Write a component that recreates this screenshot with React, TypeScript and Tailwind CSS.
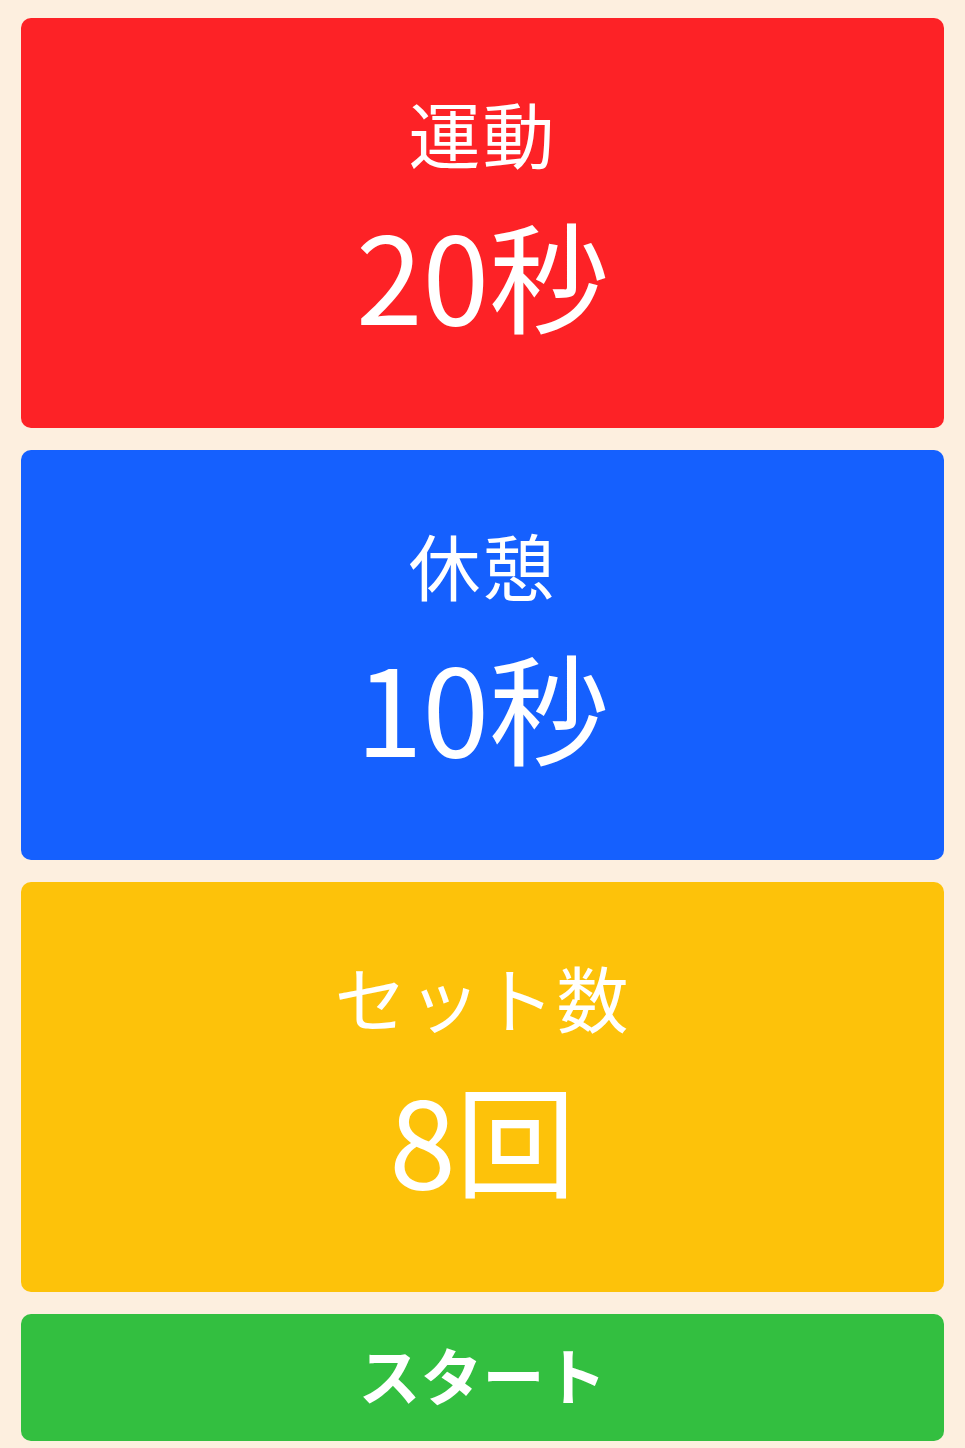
const cards = [
  { label: "運動", value: "20秒", bg: "bg-[#fd2226]" },
  { label: "休憩", value: "10秒", bg: "bg-[#1560fe]" },
  { label: "セット数", value: "8回", bg: "bg-[#fdc20a]" },
];

export default function App() {
  return (
    <div
      className="min-h-screen bg-[#fdefdf] px-[21px] pt-[18px] pb-[8px] flex flex-col gap-[22px]"
      style={{ fontFamily: '"Noto Sans CJK JP", "Noto Sans", sans-serif' }}
    >
      {cards.map((c) => (
        <div
          key={c.label}
          className={`${c.bg} h-[410px] rounded-[10px] pb-[18px] flex flex-col items-center justify-center gap-[45px] text-white`}
        >
          <div className="text-[72px] leading-none tracking-[2px]">{c.label}</div>
          <div className="text-[120px] leading-none">{c.value}</div>
        </div>
      ))}
      <button className="h-[127px] rounded-[10px] bg-[#33bf40] pb-[8px] text-white text-[62px] font-bold leading-none flex items-center justify-center">
        スタート
      </button>
    </div>
  );
}
